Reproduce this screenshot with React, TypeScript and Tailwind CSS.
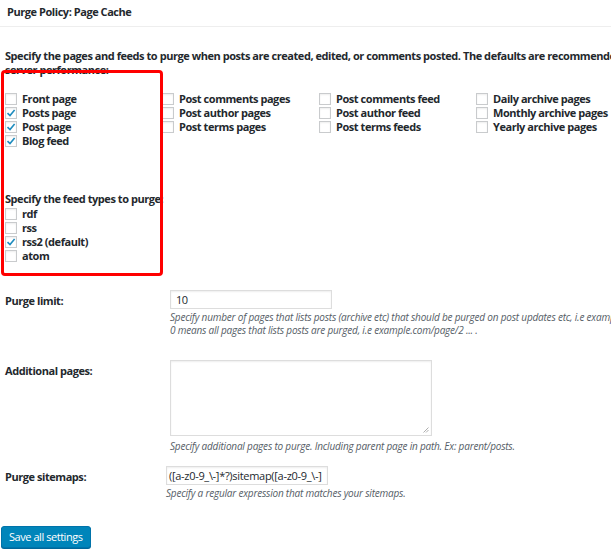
const COLS = [
  [
    { label: "Front page", checked: false },
    { label: "Posts page", checked: true },
    { label: "Post page", checked: true },
    { label: "Blog feed", checked: true },
  ],
  [
    { label: "Post comments pages", checked: false },
    { label: "Post author pages", checked: false },
    { label: "Post terms pages", checked: false },
  ],
  [
    { label: "Post comments feed", checked: false },
    { label: "Post author feed", checked: false },
    { label: "Post terms feeds", checked: false },
  ],
  [
    { label: "Daily archive pages", checked: false },
    { label: "Monthly archive pages", checked: false },
    { label: "Yearly archive pages", checked: false },
  ],
];

const FEEDS = [
  { label: "rdf", checked: false },
  { label: "rss", checked: false },
  { label: "rss2 (default)", checked: true },
  { label: "atom", checked: false },
];

function Box({ checked }: { checked: boolean }) {
  return (
    <span className="w-[12px] h-[12px] border border-[#c9cbcd] bg-white flex items-center justify-center shrink-0 shadow-[inset_0_1px_2px_rgba(0,0,0,0.07)]">
      {checked && (
        <svg width="10" height="10" viewBox="0 0 10 10">
          <path d="M1.5 5.2 L4 7.6 L8.6 2" fill="none" stroke="#1e8cbe" strokeWidth="1.6" />
        </svg>
      )}
    </span>
  );
}

function Check({ label, checked }: { label: string; checked: boolean }) {
  return (
    <label className="flex items-center gap-[5px] h-[14px]">
      <Box checked={checked} />
      <span className="font-bold whitespace-nowrap">{label}</span>
    </label>
  );
}

export default function App() {
  return (
    <div className="relative w-[611px] h-[556px] bg-white overflow-hidden text-[#23282d] text-[11px] leading-[14px] tracking-[-0.45px] font-['Open_Sans',sans-serif]">
      <div className="h-[27px] border-b border-[#eeeeee] px-[7px] pt-[5px] font-bold text-[11px]">
        Purge Policy: Page Cache
      </div>

      <div className="pl-[5px] pt-[22px]">
        <p className="font-bold whitespace-nowrap">
          Specify the pages and feeds to purge when posts are created, edited, or comments posted. The defaults are recommended
          <br />
          server performance:
        </p>

        <div className="flex mt-[15px]">
          {COLS.map((col, i) => (
            <div key={i} className="w-[157px] shrink-0 flex flex-col">
              {col.map((c) => (
                <Check key={c.label} label={c.label} checked={c.checked} />
              ))}
            </div>
          ))}
        </div>

        <p className="font-bold mt-[44px]">Specify the feed types to purge:</p>
        <div className="flex flex-col mt-[1px]">
          {FEEDS.map((c) => (
            <Check key={c.label} label={c.label} checked={c.checked} />
          ))}
        </div>

        <div className="mt-[27px] flex flex-col">
          <div className="flex">
            <div className="w-[165px] shrink-0 font-bold pt-[4px]">Purge limit:</div>
            <div>
              <div className="w-[162px] h-[19px] border border-[#dddddd] px-[5px] flex items-center shadow-[inset_0_1px_2px_rgba(0,0,0,0.07)]">10</div>
              <p className="italic text-[10px] leading-[13px] tracking-[-0.2px] text-[#555d66] whitespace-nowrap mt-[2px]">
                Specify number of pages that lists posts (archive etc) that should be purged on post updates etc, i.e example.com/ ...
                <br />
                0 means all pages that lists posts are purged, i.e example.com/page/2 ... .
              </p>
            </div>
          </div>

          <div className="flex mt-[23px]">
            <div className="w-[165px] shrink-0 font-bold pt-[4px]">Additional pages:</div>
            <div>
              <div className="relative w-[262px] h-[76px] border border-[#dddddd] shadow-[inset_0_1px_2px_rgba(0,0,0,0.07)]">
                <svg className="absolute right-[2px] bottom-[2px]" width="6" height="6" viewBox="0 0 6 6">
                  <path d="M0.5 5.5 L5.5 0.5 M3 5.5 L5.5 3" stroke="#999" strokeWidth="0.8" />
                </svg>
              </div>
              <p className="italic text-[10px] leading-[13px] tracking-[-0.2px] text-[#555d66] whitespace-nowrap mt-[4px]">
                Specify additional pages to purge. Including parent page in path. Ex: parent/posts.
              </p>
            </div>
          </div>

          <div className="flex mt-[13px]">
            <div className="w-[161px] shrink-0 font-bold pt-[4px]">Purge sitemaps:</div>
            <div>
              <div className="w-[162px] h-[19px] border border-[#dddddd] px-[2px] flex items-center text-[11px] tracking-[-0.3px] whitespace-nowrap overflow-hidden shadow-[inset_0_1px_2px_rgba(0,0,0,0.07)]">
                ([a-z0-9_\-]*?)sitemap([a-z0-9_\-]
              </div>
              <p className="italic text-[10px] leading-[13px] tracking-[-0.2px] text-[#555d66] whitespace-nowrap mt-[2px]">
                Specify a regular expression that matches your sitemaps.
              </p>
            </div>
          </div>
        </div>
      </div>

      <button className="absolute left-[1px] top-[526px] h-[22px] px-[7px] rounded-[3px] bg-[#0085ba] border border-[#0073aa] text-white text-[11px] shadow-[0_1px_0_#006799]">
        Save all settings
      </button>

      <div className="absolute left-[1px] top-[70px] w-[162px] h-[206px] border-[3px] border-[#ff0000] rounded-[4px]" />
    </div>
  );
}
